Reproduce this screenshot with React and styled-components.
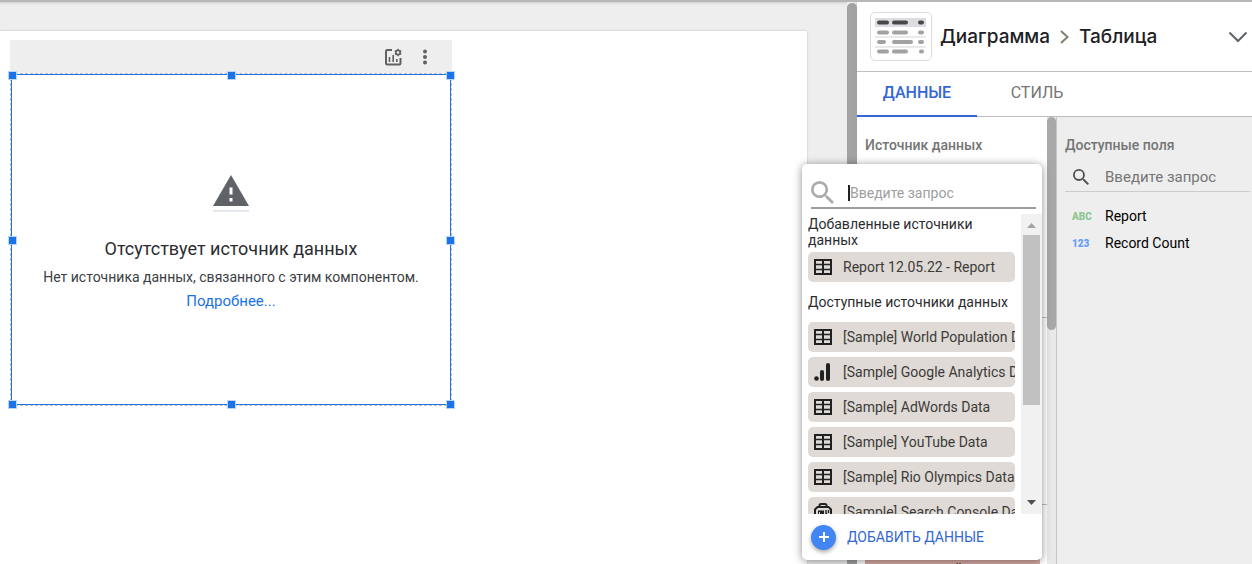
import React from "react";
import styled, { createGlobalStyle } from "styled-components";

const GlobalStyle = createGlobalStyle`
  * {
    box-sizing: border-box;
  }

  body {
    margin: 0;
    font-family: Roboto, "Liberation Sans", sans-serif;
    font-size: 14px;
    color: #2b2c2f;
  }

  button, input {
    font-family: inherit;
    font-size: inherit;
  }

  h1, h2, p, ul {
    margin: 0;
    padding: 0;
    font-weight: 400;
  }
`

const Layout = styled.div`
  display: flex;
  height: 100vh;
  overflow: hidden;
  background-color: #eeeeee;
  border-top: 2px solid #b7b7b7;
`

const Workspace = styled.main`
  flex: 1;
  min-width: 0;
  padding: 29px 40px 0 0;
  box-shadow: inset 0 3px 3px -2px #cccccc;
`

const Sheet = styled.div`
  height: 100%;
  padding: 9px 10px;
  background-color: #ffffff;
  box-shadow: 0 0 2px #bdbdbd;
`

const Widget = styled.section`
  width: 442px;
`

const WidgetToolbar = styled.div`
  display: flex;
  align-items: center;
  justify-content: flex-end;
  gap: 12px;
  height: 33px;
  padding: 0 17px 0 0;
  background-color: #eeeeee;
`

const IconButton = styled.button`
  display: flex;
  align-items: center;
  justify-content: center;
  width: 20px;
  height: 20px;
  padding: 0;
  border: 0;
  background: none;
  color: #616161;
`

const WidgetOutline = styled.div`
  border: 1px dashed #c0c0c0;
`

const WidgetFrame = styled.div`
  position: relative;
  display: flex;
  flex-direction: column;
  align-items: center;
  height: 331px;
  padding-top: 100px;
  border: 1px solid #1a73e8;
`

const Handle = styled.span`
  position: absolute;
  left: ${props => props.$x};
  top: ${props => props.$y};
  width: 9px;
  height: 9px;
  margin: -4px 0 0 -4px;
  border: 1px solid #b9d5f9;
  background-color: #1a73e8;
`

const EmptyTitle = styled.h2`
  margin-top: 25px;
  font-size: 18px;
  line-height: 24px;
`

const EmptyText = styled.p`
  margin-top: 4px;
  line-height: 24px;
  color: #3c4043;
`

const EmptyLink = styled.a`
  font-size: 15px;
  line-height: 24px;
  color: #1a73e8;
  text-decoration: none;
`

const WorkspaceScroll = styled.div`
  width: 10px;
  margin-top: 1px;
  border-radius: 5px 5px 0 0;
  background-color: #a3a3a3;
`

const Panel = styled.aside`
  display: flex;
  flex-direction: column;
  width: 395px;
  background-color: #ffffff;
  box-shadow: 0 0 4px #9e9e9e;
`

const PanelHeader = styled.header`
  display: flex;
  align-items: center;
  height: 70px;
  padding: 0 4px 0 13px;
  border-bottom: 1px solid #bdbdbd;
`

const Crumbs = styled.h1`
  display: flex;
  flex: 1;
  align-items: center;
  gap: 9px;
  padding-left: 8px;
  font-family: Inter, Roboto, sans-serif;
  font-size: 19px;
  font-weight: 500;
  color: #202124;
`

const Tabs = styled.nav`
  display: flex;
  height: 45px;
  border-bottom: 1px solid #bdbdbd;
`

const Tab = styled.button`
  width: 120px;
  height: 45px;
  padding: 0 0 3px;
  border: 0;
  border-bottom: 2px solid ${props => (props.$active ? "#3367d6" : "transparent")};
  background: none;
  color: ${props => (props.$active ? "#3367d6" : "#757575")};
  font-size: 16px;
  font-weight: ${props => (props.$active ? 500 : 400)};
`

const PanelBody = styled.div`
  display: flex;
  flex: 1;
  min-height: 0;
`

const Setup = styled.div`
  position: relative;
  flex: none;
  width: 190px;
`

const SetupSection = styled.div`
  height: ${props => props.$height};
  padding: 20px 8px;
  border-bottom: 1px solid #bdbdbd;
`

const Label = styled.h2`
  font-size: 14px;
  font-weight: 500;
  line-height: 16px;
  color: #757575;
`

const InvalidField = styled.button`
  display: block;
  width: 175px;
  height: 20px;
  margin: 54px 8px 0;
  padding: 0 0 0 12px;
  border: 0;
  background-color: #d8a9a5;
  color: #202124;
`

const SetupScroll = styled.div`
  flex: none;
  width: 10px;
  border-right: 1px solid #c6c6c6;
  background-color: #e8e8e8;
`

const SetupThumb = styled.div`
  height: 213px;
  border-radius: 5px;
  background-color: #a8a8a8;
`

const Fields = styled.div`
  flex: 1;
  min-width: 0;
  padding: 20px 2px 0 8px;
  background-color: #eeeeee;
`

const FieldSearch = styled.label`
  display: flex;
  align-items: center;
  gap: 16px;
  height: 31px;
  margin-top: 8px;
  padding: 2px 0 0 8px;
  border-bottom: 1px solid #cccccc;
  color: #505050;
`

const FieldInput = styled.input`
  flex: 1;
  min-width: 0;
  padding: 0;
  border: 0;
  outline: 0;
  background: none;
  font-size: 15px;

  &::placeholder {
    color: #757575;
  }
`

const FieldList = styled.ul`
  padding-top: 10px;
  list-style: none;
`

const Field = styled.li`
  display: flex;
  align-items: center;
  height: 27px;
  padding-left: 7px;
  color: #000000;
`

const FieldType = styled.span`
  width: 33px;
  padding-top: 2px;
  font-size: 10px;
  font-weight: 900;
  color: ${props => props.$color};
`

const Picker = styled.div`
  position: absolute;
  top: 47px;
  right: 5px;
  width: 240px;
  border-radius: 5px;
  background-color: #ffffff;
  box-shadow: 0 1px 8px rgba(0, 0, 0, 0.45);
  overflow: hidden;
`

const PickerSearch = styled.label`
  display: flex;
  align-items: center;
  gap: 14px;
  height: 35px;
  margin: 10px 6px 5px 9px;
  padding-top: 4px;
  border-bottom: 2px solid #9e9e9e;
  color: #aaaaaa;
`

const PickerInput = styled.input`
  flex: 1;
  min-width: 0;
  height: 16px;
  padding: 0;
  border: 0;
  border-left: 2px solid #202124;
  outline: 0;

  &::placeholder {
    color: #9e9e9e;
  }
`

const PickerScroller = styled.div`
  display: flex;
  height: 300px;
`

const PickerList = styled.div`
  flex: 1;
  min-width: 0;
  padding: 2px 6px 0;
  overflow: hidden;
`

const GroupTitle = styled.h2`
  margin: 0 0 ${props => (props.$wide ? "12px" : "4px")};
  font-size: 14px;
  line-height: 16px;
`

const Group = styled.div`
  margin-bottom: 12px;
`

const Source = styled.button`
  display: flex;
  align-items: center;
  gap: 11px;
  width: 100%;
  height: 30px;
  margin-bottom: 5px;
  padding: 0 0 0 6px;
  border: 0;
  border-radius: 5px;
  background-color: #dfdad6;
  color: #3c3a39;
  white-space: nowrap;
  overflow: hidden;

  &:last-child {
    margin-bottom: 0;
  }

  svg {
    flex: none;
    color: #212121;
  }
`

const PickerScroll = styled.div`
  display: flex;
  flex-direction: column;
  align-items: center;
  width: 21px;
  background-color: #f1f1f1;
`

const PickerThumb = styled.div`
  width: 17px;
  height: 170px;
  margin-bottom: auto;
  background-color: #c1c1c1;
`

const ScrollArrow = styled.svg`
  display: block;
  width: 9px;
  height: 21px;
`

const AddButton = styled.button`
  display: flex;
  align-items: center;
  gap: 11px;
  width: 100%;
  height: 46px;
  padding: 0 9px;
  border: 0;
  background: none;
  color: #3367d6;
`

const AddBadge = styled.span`
  display: flex;
  align-items: center;
  justify-content: center;
  width: 25px;
  height: 25px;
  border-radius: 50%;
  background-color: #4285f4;
  box-shadow: 0 2px 4px rgba(0, 0, 0, 0.35);
`

const SearchIcon = ({ size }) => (
  <svg width={size} height={size} viewBox="3 3 17.5 17.5" fill="currentColor">
    <path d="M15.5 14h-.79l-.28-.27A6.47 6.47 0 0 0 16 9.5 6.5 6.5 0 1 0 9.5 16c1.61 0 3.09-.59 4.23-1.57l.27.28v.79l5 4.99L20.49 19l-4.99-5zm-6 0a4.5 4.5 0 1 1 0-9 4.5 4.5 0 0 1 0 9z" />
  </svg>
)

const ChartSettingsIcon = () => (
  <svg width="18" height="18" viewBox="0 0 18 18" fill="none" stroke="currentColor" strokeWidth="2">
    <path d="M8 2H3.5Q2 2 2 3.5V15q0 1.500 1.500 1.500H15q1.500 0 1.500-1.500V10" />
    <path d="M5.500 9v5M9.200 7v7M12.800 11v3" strokeWidth="1.600" />
    <circle cx="14" cy="4.500" r="2.200" strokeWidth="1.700" />
    <path d="M14 .8v1.500M14 6.700v1.500M10.800 2.700l1.300.7M15.900 5.600l1.300.7M10.800 6.300l1.300-.7M15.900 3.400l1.300-.7" strokeWidth="1.400" />
  </svg>
)

const MoreIcon = () => (
  <svg width="6" height="16" viewBox="0 0 6 16" fill="currentColor">
    <circle cx="3" cy="2.500" r="2" />
    <circle cx="3" cy="8" r="2" />
    <circle cx="3" cy="13.500" r="2" />
  </svg>
)

const WarningIcon = () => (
  <svg width="36" height="37" viewBox="0 0 36 37">
    <path d="M18 0 36 31H0z" fill="#5f6368" />
    <path d="M16.500 12.500h3v7h-3zM16.500 23h3v3.500h-3z" fill="#ffffff" />
    <path d="M0 35h36v1.500H0z" fill="#dae2ec" />
  </svg>
)

const TablePreview = () => (
  <svg width="62" height="49" viewBox="0 0 62 49">
    <rect x=".5" y=".5" width="61" height="48" rx="4.500" fill="#ffffff" stroke="#dadce0" />
    <path d="M5 6h51v9H5z" fill="#dcdce1" />
    <path d="M5 25h51M5 35h51" stroke="#e4e4e7" strokeWidth="1.500" />
    <g strokeWidth="4" strokeLinecap="round">
      <path d="M9 10.500h8M24 10.500h12M50 10.500h2" stroke="#47474a" />
      <path d="M9 20.500h8M24 20.500h12M50 20.500h2M9 30h5M24 30h17M50 30h2M9 39.500h8M24 39.500h12M51 39.500h1" stroke="#a2a2a2" />
    </g>
  </svg>
)

const ChevronRight = () => (
  <svg width="11" height="14" viewBox="0 0 11 14" fill="none" stroke="#80816f" strokeWidth="2">
    <path d="M2 1l6.500 6L2 13" />
  </svg>
)

const ChevronDown = () => (
  <svg width="20" height="12" viewBox="0 0 20 12" fill="none" stroke="#5f6368" strokeWidth="2">
    <path d="M1.500 1.500 10 10l8.500-8.500" />
  </svg>
)

const TableIcon = () => (
  <svg width="18" height="16" viewBox="0 0 18 16" fill="none" stroke="currentColor" strokeWidth="2">
    <path d="M1 1h16v14H1zM9 1v14" />
    <path d="M1 5.500h16M1 10.500h16" strokeWidth="1.500" />
  </svg>
)

const AnalyticsIcon = () => (
  <svg width="18" height="18" viewBox="0 0 18 18" fill="currentColor">
    <circle cx="2.500" cy="15.500" r="2.300" />
    <rect x="6" y="7" width="4" height="11" rx="2" />
    <rect x="12" y="0" width="4" height="18" rx="2" />
  </svg>
)

const ConsoleIcon = () => (
  <svg width="18" height="18" viewBox="0 0 18 18" fill="none" stroke="currentColor" strokeWidth="2">
    <path d="M5.500 4V2.500Q5.500 1 7 1h4q1.500 0 1.500 1.500V4" />
    <path d="M3.500 4h11L17 6.500V17H1V6.500z" />
    <path d="M4 7.500h6v6.500H4z" fill="currentColor" stroke="none" />
    <path d="M5.500 9v2.500" stroke="#dfdad6" strokeWidth="1" />
    <path d="M12 7v3l1 1.500v3M14.500 7v3" strokeWidth="1.400" />
  </svg>
)

const handles = [
  ["0%", "0%"], ["50%", "0%"], ["100%", "0%"],
  ["0%", "50%"], ["100%", "50%"],
  ["0%", "100%"], ["50%", "100%"], ["100%", "100%"],
]

const sources = [
  { name: "[Sample] World Population Data", icon: <TableIcon /> },
  { name: "[Sample] Google Analytics Data", icon: <AnalyticsIcon /> },
  { name: "[Sample] AdWords Data", icon: <TableIcon /> },
  { name: "[Sample] YouTube Data", icon: <TableIcon /> },
  { name: "[Sample] Rio Olympics Data", icon: <TableIcon /> },
  { name: "[Sample] Search Console Data", icon: <ConsoleIcon /> },
]

const EmptyWidget = () => (
  <Widget>
    <WidgetToolbar>
      <IconButton aria-label="Настройки диаграммы"><ChartSettingsIcon /></IconButton>
      <IconButton aria-label="Ещё"><MoreIcon /></IconButton>
    </WidgetToolbar>
    <WidgetOutline>
      <WidgetFrame>
        <WarningIcon />
        <EmptyTitle>Отсутствует источник данных</EmptyTitle>
        <EmptyText>Нет источника данных, связанного с этим компонентом.</EmptyText>
        <EmptyLink href="#details">Подробнее...</EmptyLink>
        {handles.map(([x, y]) => <Handle key={x + y} $x={x} $y={y} />)}
      </WidgetFrame>
    </WidgetOutline>
  </Widget>
)

const SourcePicker = () => (
  <Picker>
    <PickerSearch>
      <SearchIcon size={23} />
      <PickerInput placeholder="Введите запрос" aria-label="Поиск источника" />
    </PickerSearch>
    <PickerScroller>
      <PickerList>
        <Group>
          <GroupTitle>Добавленные источники данных</GroupTitle>
          <Source><TableIcon />Report 12.05.22 - Report</Source>
        </Group>
        <Group>
          <GroupTitle $wide>Доступные источники данных</GroupTitle>
          {sources.map(source => (
            <Source key={source.name}>{source.icon}{source.name}</Source>
          ))}
        </Group>
      </PickerList>
      <PickerScroll>
        <ScrollArrow viewBox="0 0 9 21"><path d="M0 14h9L4.500 9z" fill="#a3a3a3" /></ScrollArrow>
        <PickerThumb />
        <ScrollArrow viewBox="0 0 9 21"><path d="M0 7h9l-4.500 5z" fill="#505050" /></ScrollArrow>
      </PickerScroll>
    </PickerScroller>
    <AddButton>
      <AddBadge>
        <svg width="10" height="10" viewBox="0 0 10 10" stroke="#ffffff" strokeWidth="2">
          <path d="M5 0v10M0 5h10" />
        </svg>
      </AddBadge>
      ДОБАВИТЬ ДАННЫЕ
    </AddButton>
  </Picker>
)

export const App = () => {
  return (
    <Layout>
      <GlobalStyle />
      <Workspace>
        <Sheet>
          <EmptyWidget />
        </Sheet>
      </Workspace>
      <WorkspaceScroll />
      <Panel>
        <PanelHeader>
          <TablePreview />
          <Crumbs>
            <span>Диаграмма</span>
            <ChevronRight />
            <span>Таблица</span>
          </Crumbs>
          <IconButton aria-label="Развернуть"><ChevronDown /></IconButton>
        </PanelHeader>
        <Tabs>
          <Tab $active>ДАННЫЕ</Tab>
          <Tab>СТИЛЬ</Tab>
        </Tabs>
        <PanelBody>
          <Setup>
            <SetupSection $height="201px">
              <Label>Источник данных</Label>
            </SetupSection>
            <SetupSection $height="187px" />
            <InvalidField>й</InvalidField>
            <SourcePicker />
          </Setup>
          <SetupScroll>
            <SetupThumb />
          </SetupScroll>
          <Fields>
            <Label>Доступные поля</Label>
            <FieldSearch>
              <SearchIcon size={16} />
              <FieldInput placeholder="Введите запрос" aria-label="Поиск поля" />
            </FieldSearch>
            <FieldList>
              <Field><FieldType $color="#8fc793">ABC</FieldType>Report</Field>
              <Field><FieldType $color="#669df6">123</FieldType>Record Count</Field>
            </FieldList>
          </Fields>
        </PanelBody>
      </Panel>
    </Layout>
  )
}

export default App
